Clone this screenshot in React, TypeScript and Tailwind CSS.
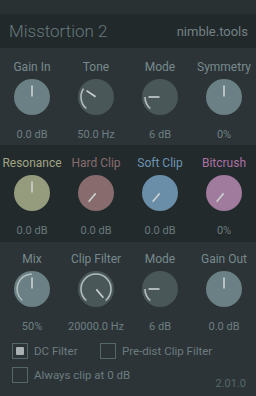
import React from 'react';

type KnobProps = {
  label: string;
  value: string;
  fill: string;
  labelColor: string;
  valueColor: string;
  angle: number;
  arc?: boolean;
};

const START = -140;

const pt = (r: number, a: number) => {
  const rad = (a * Math.PI) / 180;
  return [18 + r * Math.sin(rad), 18 - r * Math.cos(rad)];
};

function Knob({ fill, angle, arc }: { fill: string; angle: number; arc?: boolean }) {
  const [x1, y1] = pt(0.5, angle);
  const [x2, y2] = pt(11.5, angle);
  const [ax, ay] = pt(15, START);
  const [bx, by] = pt(15, angle);
  const large = angle - START > 180 ? 1 : 0;
  return (
    <svg width="36" height="36" viewBox="0 0 36 36">
      <circle cx="18" cy="18" r="18" fill={fill} />
      {arc && (
        <path
          d={`M ${ax} ${ay} A 15 15 0 ${large} 1 ${bx} ${by}`}
          fill="none"
          stroke="#b3bdbd"
          strokeWidth="1.6"
        />
      )}
      <line x1={x1} y1={y1} x2={x2} y2={y2} stroke="#c9d1d1" strokeWidth="1.6" />
    </svg>
  );
}

function KnobCell({ label, value, fill, labelColor, valueColor, angle, arc }: KnobProps) {
  return (
    <div className="flex flex-col items-center">
      <div className="text-[12px] leading-[14px] whitespace-nowrap" style={{ color: labelColor }}>
        {label}
      </div>
      <div className="mt-[5px]">
        <Knob fill={fill} angle={angle} arc={arc} />
      </div>
      <div className="mt-[13px] text-[11px] leading-[14px] whitespace-nowrap" style={{ color: valueColor }}>
        {value}
      </div>
    </div>
  );
}

const LIGHT = '#6a8084';
const DARK = '#4a5759';
const LBL = '#788a8d';
const VAL = '#6e7f83';

const row1: KnobProps[] = [
  { label: 'Gain In', value: '0.0 dB', fill: LIGHT, labelColor: LBL, valueColor: VAL, angle: 0 },
  { label: 'Tone', value: '50.0 Hz', fill: DARK, labelColor: LBL, valueColor: VAL, angle: -56, arc: true },
  { label: 'Mode', value: '6 dB', fill: DARK, labelColor: LBL, valueColor: VAL, angle: -90, arc: true },
  { label: 'Symmetry', value: '0%', fill: LIGHT, labelColor: LBL, valueColor: VAL, angle: 0 },
];

const row2: KnobProps[] = [
  { label: 'Resonance', value: '0.0 dB', fill: '#959b7d', labelColor: '#a0a584', valueColor: '#687a7d', angle: 0 },
  { label: 'Hard Clip', value: '0.0 dB', fill: '#876b6d', labelColor: '#866c6e', valueColor: '#687a7d', angle: -140 },
  { label: 'Soft Clip', value: '0.0 dB', fill: '#6a8ea8', labelColor: '#6c95b2', valueColor: '#687a7d', angle: -140 },
  { label: 'Bitcrush', value: '0%', fill: '#a07b9e', labelColor: '#ab72a4', valueColor: '#687a7d', angle: -140 },
];

const row3: KnobProps[] = [
  { label: 'Mix', value: '50%', fill: LIGHT, labelColor: LBL, valueColor: VAL, angle: 0, arc: true },
  { label: 'Clip Filter', value: '20000.0 Hz', fill: DARK, labelColor: LBL, valueColor: VAL, angle: 140, arc: true },
  { label: 'Mode', value: '6 dB', fill: DARK, labelColor: LBL, valueColor: VAL, angle: -90, arc: true },
  { label: 'Gain Out', value: '0.0 dB', fill: LIGHT, labelColor: LBL, valueColor: VAL, angle: 0 },
];

function Check({ label, checked }: { label: string; checked?: boolean }) {
  return (
    <div className="flex items-center gap-[6px]">
      <div className="w-[16px] h-[16px] border border-[#56676a] flex items-center justify-center">
        {checked && <div className="w-[8px] h-[8px] rounded-[1px] bg-[#a8b0b1]" />}
      </div>
      <span className="text-[11.5px] leading-[14px] text-[#6c7c80] whitespace-nowrap">{label}</span>
    </div>
  );
}

export default function App() {
  return (
    <div
      className="w-[256px] h-[396px] overflow-hidden bg-[#2c3437] flex flex-col"
      style={{ fontFamily: 'Roboto, "Noto Sans", sans-serif' }}
    >
      <div className="h-[14px] bg-[#293133]" />
      <div className="h-[34px] bg-[#22292b] flex items-center justify-between pl-[9px] pr-[8px]">
        <span className="text-[17px] leading-none font-light text-[#66797c]">Misstortion 2</span>
        <span className="text-[13px] leading-none text-[#748184]">nimble.tools</span>
      </div>

      <div className="h-[97px] bg-[#2c3437] grid grid-cols-4 pt-[12px]">
        {row1.map((k, i) => (
          <KnobCell key={i} {...k} />
        ))}
      </div>

      <div className="h-[97px] bg-[#232a2c] grid grid-cols-4 pt-[11px]">
        {row2.map((k, i) => (
          <KnobCell key={i} {...k} />
        ))}
      </div>

      <div className="bg-[#2c3437] grid grid-cols-4 pt-[10px]">
        {row3.map((k, i) => (
          <KnobCell key={i} {...k} />
        ))}
      </div>

      <div className="relative flex-1 pl-[12px] pt-[9px]">
        <div className="flex">
          <div className="w-[88px]">
            <Check label="DC Filter" checked />
          </div>
          <Check label="Pre-dist Clip Filter" />
        </div>
        <div className="mt-[8px]">
          <Check label="Always clip at 0 dB" />
        </div>
        <span className="absolute right-[10px] bottom-[5px] text-[11px] leading-[14px] text-[#56676a]">2.01.0</span>
      </div>
    </div>
  );
}
